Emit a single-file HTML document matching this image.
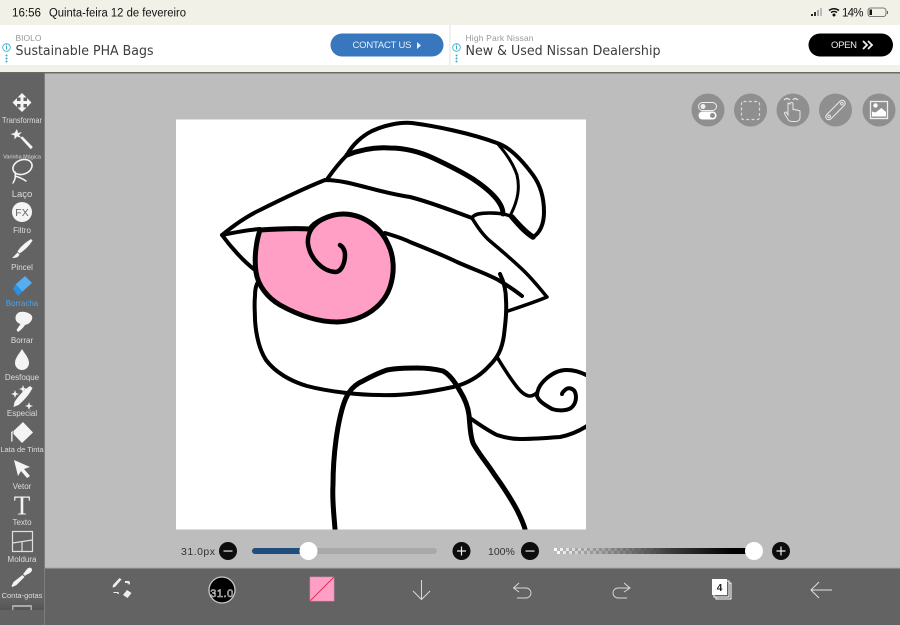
<!DOCTYPE html>
<html><head><meta charset="utf-8"><style>
html,body{margin:0;padding:0;width:900px;height:625px;overflow:hidden;background:#bdbdbd}
svg.root{display:block;filter:blur(.3px)}
text{font-family:"Liberation Sans",sans-serif}
.l{font-size:8px;fill:#dcdcdc;text-anchor:middle}
.t{font-family:"DejaVu Sans",sans-serif;font-size:13.5px;fill:#3c3c3c}
</style></head><body>
<svg class="root" width="900" height="625" viewBox="0 0 900 625" xmlns="http://www.w3.org/2000/svg">
<defs>
<linearGradient id="op" x1="0" x2="1"><stop offset="0" stop-color="#000" stop-opacity="0"/><stop offset=".25" stop-color="#000" stop-opacity=".25"/><stop offset=".6" stop-color="#000" stop-opacity=".7"/><stop offset=".9" stop-color="#000" stop-opacity="1"/><stop offset="1" stop-color="#000"/></linearGradient>
<pattern id="ck" width="6" height="6" patternUnits="userSpaceOnUse" x="554" y="548"><rect width="3" height="3" fill="#fff"/><rect x="3" y="3" width="3" height="3" fill="#fff"/></pattern>
<linearGradient id="ckfade" x1="0" x2="1"><stop offset="0" stop-color="#fff"/><stop offset=".25" stop-color="#fff" stop-opacity=".5"/><stop offset=".5" stop-color="#fff" stop-opacity=".15"/><stop offset="1" stop-color="#fff" stop-opacity="0"/></linearGradient>
<mask id="ckm"><rect x="554" y="548" width="198" height="6" fill="url(#ckfade)"/></mask>
<linearGradient id="bt" x1="0" y1="0" x2="0" y2="1"><stop offset="0" stop-color="#555" stop-opacity="0"/><stop offset="1" stop-color="#4a4a4a"/></linearGradient>
</defs>
<rect width="900" height="625" fill="#bdbdbd"/>
<!-- status bar -->
<rect width="900" height="72" fill="#f2f1e8"/>
<text x="12" y="16.500" font-size="11.500" fill="#111" textLength="29" lengthAdjust="spacingAndGlyphs">16:56</text>
<text x="49" y="16.500" font-size="11.500" fill="#111" textLength="137" lengthAdjust="spacingAndGlyphs">Quinta-feira 12 de fevereiro</text>
<rect x="811" y="14" width="2" height="2" fill="#222"/><rect x="814" y="12" width="2" height="4" fill="#333"/><rect x="817" y="10" width="2" height="6" fill="#aaa"/><rect x="820" y="8" width="2" height="8" fill="#bbb"/>
<path d="M829 10.500a8 8 0 0 1 10 0M831 12.500a5 5 0 0 1 6 0" fill="none" stroke="#111" stroke-width="1.500"/><circle cx="834" cy="15" r="1.500" fill="#111"/>
<text x="842" y="16.500" font-size="11.500" fill="#111" textLength="21.500">14%</text>
<rect x="868" y="8" width="18" height="8.500" rx="2.500" fill="none" stroke="#555" stroke-width=".8"/><rect x="869.500" y="9.500" width="2.500" height="5.500" fill="#111"/><rect x="887" y="11" width="1" height="3" fill="#666"/>
<!-- ads -->
<rect x="0" y="25" width="449" height="40" fill="#fff"/>
<rect x="451" y="25" width="449" height="40" fill="#fff"/>
<text x="15.500" y="41" font-size="8.500" fill="#999">BIOLO</text>
<text class="t" x="15.500" y="55" textLength="138" lengthAdjust="spacingAndGlyphs">Sustainable PHA Bags</text>
<rect x="330.500" y="33.500" width="113" height="23" rx="11.500" fill="#3876bd"/>
<text x="352.500" y="48" font-size="9.500" fill="#e8f0fa" textLength="59">CONTACT US</text>
<path d="M417 42l4 3.500-4 3.500z" fill="#e8f0fa"/>
<circle cx="6.500" cy="47.500" r="3.800" fill="none" stroke="#3ba7c4" stroke-width=".8"/><rect x="6" y="46" width="1" height="3.500" fill="#3ba7c4"/><rect x="6" y="44.500" width="1" height="1" fill="#3ba7c4"/>
<circle cx="6.500" cy="55.500" r="1" fill="#3ba7c4"/><circle cx="6.500" cy="58.500" r="1" fill="#3ba7c4"/><circle cx="6.500" cy="61.500" r="1" fill="#3ba7c4"/>
<text x="465.500" y="41" font-size="8.500" fill="#999" textLength="68">High Park Nissan</text>
<text class="t" x="465.500" y="55" textLength="195" lengthAdjust="spacingAndGlyphs">New &amp; Used Nissan Dealership</text>
<rect x="808.500" y="33.500" width="84.500" height="23" rx="11.500" fill="#000"/>
<text x="831" y="48" font-size="9.500" fill="#eee" textLength="26">OPEN</text>
<path d="M863 41l4 4-4 4M868 41l4 4-4 4" fill="none" stroke="#eee" stroke-width="1.800"/>
<circle cx="456.500" cy="47.500" r="3.800" fill="none" stroke="#3ba7c4" stroke-width=".8"/><rect x="456" y="46" width="1" height="3.500" fill="#3ba7c4"/><rect x="456" y="44.500" width="1" height="1" fill="#3ba7c4"/>
<circle cx="456.500" cy="55.500" r="1" fill="#3ba7c4"/><circle cx="456.500" cy="58.500" r="1" fill="#3ba7c4"/><circle cx="456.500" cy="61.500" r="1" fill="#3ba7c4"/>
<rect x="0" y="72" width="900" height="1.500" fill="#6a6a66"/>
<!-- sidebar -->
<rect x="0" y="73" width="44" height="552" fill="#636363"/>
<rect x="44" y="73" width="1" height="552" fill="#7d7d7d"/>
<g fill="#f4f4f4">
<!-- transform -->
<path d="M22 93l4.500 4.500h-3v3.500h3.500v-3l4.500 4.500-4.500 4.500v-3h-3.500v3.500h3l-4.500 4.500-4.500-4.500h3v-3.500h-3.500v3l-4.500-4.500 4.500-4.500v3h3.500v-3.500h-3z"/>
<!-- wand -->
<path d="M20.500 138l1.800-1.800 10.500 10.800-2 2.300z"/>
<path d="M17 129l1 4 4-1-3 3 2.500 3-4.500-1.500-2.500 3v-4l-4-1.500 4-1z"/>
<!-- lasso -->
<ellipse cx="22.500" cy="167" rx="9.800" ry="7.200" transform="rotate(-20 22.500 167)" fill="none" stroke="#f4f4f4" stroke-width="1.600"/>
<path d="M15 172C16 176 15 180 13 183M15 176C19 177 23 179 26 181" fill="none" stroke="#f4f4f4" stroke-width="1.500" stroke-linecap="round"/>
<!-- FX -->
<circle cx="22" cy="212" r="10"/>
<!-- brush -->
<path d="M31 239l1.500 1.500c-3 5-8 10-13 13l-2-2c3-5 8-9 13.500-12.500z"/>
<path d="M17.500 252.500l2 2c-1 3-4 3.500-7.500 3.500 2-1.500 3.500-3.500 5.500-5.500z"/>
<!-- smudge -->
<path d="M20 312c5-1 10 1 12 4 1 3-1 6-4 8l-3 1c-2 3-4 5-7 7l-1.500-2 4-6c-3-1-5-3-5-6 0-3 2-5.500 4.500-6z"/>
<!-- blur drop -->
<path d="M22 349c3 5 7 9 7 14a7 7 0 0 1-14 0c0-5 4-9 7-14z"/>
<!-- special -->
<path d="M30 386l2.500 2c-3 6-8 12-14 17l-5 2 1-5c4-6 9-12 15.500-16z"/>
<path d="M23 385l1 3 3 1-3 1-1 3-1-3-3-1 3-1zM15 390l1 3 3 1-3 1-1 3-1-3-3-1 3-1zM29 402l1 3 3 1-3 1-1 3-1-3-3-1 3-1z"/>
<!-- fill -->
<path d="M23 422l10 10.500-11 10.500-8.500-9v-3z"/>
<path d="M12.500 433.500v8h-1.300v-9.500l2-1z"/>
<!-- vector arrow -->
<path d="M14 460l16 7-6 2 6 7-3 2-6-7-3 5z"/>
<!-- eyedropper -->
<path d="M27 569c2-2 5-2 5 1 0 1-1 2-2 3l-4 2-1 1-2-2 1-1z"/>
<path d="M22.500 575l2 2-8 8-4 2-1-1 2-4z"/>
</g>
<path d="M12.500 531.500h20v20h-20zM12.500 543l20-3M22 542v9" fill="none" stroke="#dedede" stroke-width="1.200"/>
<rect x="0" y="597" width="44" height="13" fill="url(#bt)" opacity=".6"/>
<path d="M12 605h20v2H12zM12 607h1.500v3H12zM30.500 607H32v3h-1.500z" fill="#aaa"/>
<text x="22" y="216" font-size="10.500" fill="#636363" text-anchor="middle">FX</text>
<text x="22" y="514.500" font-size="27" fill="#f4f4f4" text-anchor="middle" style='font-family:"Liberation Serif",serif'>T</text>
<path d="M25 276l7 7-9.500 8.500-7-7z" fill="#55aef0"/>
<path d="M15.500 284.500l7 7-4.500 4.500-5-7z" fill="#2e8fdf"/>
<text class="l" x="22" y="123" textLength="40" lengthAdjust="spacingAndGlyphs">Transformar</text>
<text x="22" y="158.500" font-size="5.500" fill="#dcdcdc" text-anchor="middle">Varinha Mágica</text>
<text class="l" x="22" y="197" style="font-size:9.500px">Laço</text>
<text class="l" x="22" y="233">Filtro</text>
<text class="l" x="22" y="270">Pincel</text>
<text class="l" x="22" y="306" style="fill:#4da3e8">Borracha</text>
<text class="l" x="22" y="343">Borrar</text>
<text class="l" x="22" y="380">Desfoque</text>
<text class="l" x="22" y="416">Especial</text>
<text class="l" x="22" y="452" style="font-size:7.500px">Lata de Tinta</text>
<text class="l" x="22" y="489">Vetor</text>
<text class="l" x="22" y="525">Texto</text>
<text class="l" x="22" y="562">Moldura</text>
<text class="l" x="22" y="598" style="font-size:7.500px">Conta-gotas</text>
<!-- canvas -->
<rect x="176" y="119.500" width="410" height="410" fill="#fff"/>
<svg x="176" y="119.500" width="410" height="410" viewBox="176 119.500 410 410">
<g fill="none" stroke="#000" stroke-linecap="round" stroke-linejoin="round">
<path fill="#ff9fc6" stroke-width="5" d="M260 230C275 229 295 228 310 229C314 222 330 214 343 214C362 214 380 226 388 244C394 256 395 272 390 287C384 305 365 321 337 322C318 322 298 315 280 305C268 298 258 286 256 272C254 258 256 242 260 230Z"/>
<path stroke-width="4.500" d="M323 219C312 225 307 234 308 244C310 258 322 271 335 272C342 272 345 262 345 255C345 250 343 247 340 245"/>
<path stroke-width="4" d="M222 235C232 233 246 230 260 229M222 235C230 246 243 261 255 270M222 235C233 226 245 217 260 210C280 200 305 188 325 180C350 180 375 192 410 197C430 202 450 210 472 218"/>
<path stroke-width="4" d="M328 178C335 168 340 162 347 155C352 145 362 136 372 131C385 125 400 122 412 123C435 126 470 133 497 143C510 147 522 160 533 175C541 186 544 198 544 212C544 224 540 233 533 237"/>
<path stroke-width="5" d="M347 155C360 150 375 147 390 148C405 148 420 152 433 158C448 165 462 172 473 179C485 187 495 195 500 204C503 209 503 212 503 214"/>
<path stroke-width="3" d="M497 143C505 152 513 163 517 175C520 188 518 200 511 214"/>
<path stroke-width="3.500" d="M472 218C474 214 480 213 490 213C498 213 507 214 512 217"/>
<path stroke-width="5.500" d="M512 217C518 224 525 232 533 237"/>
<path stroke-width="3.500" d="M472 218C478 228 484 236 490 241C503 252 515 262 525 272C535 282 541 290 547 297C535 302 520 307 508 311"/>
<path stroke-width="4" d="M385 233C395 236 402 238 410 242C430 250 445 256 457 262C475 270 490 275 500 281C510 287 517 292 522 296"/>
<path stroke-width="4" d="M500 274C504 282 506 290 506 300C507 315 505 325 504 335C502 350 497 358 490 365C482 374 470 383 453 387C430 392 405 396 380 395C360 395 330 392 307 386C290 381 275 372 266 360C259 349 256 335 255 320C255 312 254 305 255 296C255 290 256 285 258 282"/>
<path stroke-width="5" d="M335 529C334 515 332 500 333 485C333 470 334 455 336 440C338 425 342 405 347 396C350 390 354 386 359 383C367 379 375 374 387 370C397 368 407 368 417 368C425 368 435 369 443 371C449 374 455 382 460 391C465 399 468 407 469 415C470 425 470 435 473 443C478 453 487 463 494 474C502 485 510 497 517 510C520 516 523 522 525 529"/>
<path stroke-width="3.500" d="M497 357C503 367 510 378 517 387C521 392 526 396 530 396C533 396 535 394 537 393"/>
<path stroke-width="4" d="M590 377C583 373 575 370 567 370C558 370 552 374 547 378C541 383 537 389 537 396C539 402 547 406 552 409C558 411 566 411 571 408C576 404 577 397 575 392C573 388 568 387 565 390C563 392 562 393 562 394"/>
<path stroke-width="4" d="M470 418C480 425 487 430 497 435C506 438 513 439 520 439C535 439 545 438 560 437C570 435 580 431 590 424"/>
</g>
</svg>
<!-- top right tool buttons -->
<g fill="#8f8f8f"><circle cx="708" cy="110" r="16.500"/><circle cx="750.500" cy="110" r="16.500"/><circle cx="793" cy="110" r="16.500"/><circle cx="835.500" cy="110" r="16.500"/><circle cx="879" cy="110" r="16.500"/></g>
<rect x="698.500" y="102.500" width="18" height="8" rx="4" fill="none" stroke="#eee" stroke-width="1"/><circle cx="703" cy="106.500" r="2.500" fill="#eee"/>
<rect x="698.500" y="111.500" width="18" height="8" rx="4" fill="#fff"/><circle cx="712.500" cy="115.500" r="2.500" fill="#8f8f8f"/>
<rect x="741.500" y="101.500" width="18" height="18" rx="2" fill="none" stroke="#d8d8d8" stroke-width="1.200" stroke-dasharray="3 2.300"/>
<path d="M788 103v12l-1.500-2.500c-1-1-2.500 0-2 1l3.500 6c1 1.500 2.500 2 4 2h4c2.500 0 4-2 4-4v-6c0-1-1.500-1.500-2-.5 0-1.500-2-1.500-2.500-.5 0-1.500-2-1.500-2.500-.5v-6c0-2-3-2-3 0z" fill="none" stroke="#e6e6e6" stroke-width="1"/>
<path d="M784 100c2-2 4-2 6 0M793 100c1-2 3-2 5 0" fill="none" stroke="#e6e6e6" stroke-width="1.200"/>
<g transform="rotate(-45 835.500 110)"><rect x="823" y="107" width="25" height="6" rx="3" fill="none" stroke="#e6e6e6" stroke-width="1.100"/><circle cx="826.500" cy="110" r="1.300" fill="none" stroke="#e6e6e6"/><circle cx="844.500" cy="110" r="1.300" fill="none" stroke="#e6e6e6"/></g>
<rect x="870.500" y="101.500" width="17" height="17" fill="none" stroke="#eee" stroke-width="1.300"/>
<circle cx="875.500" cy="105.500" r="2.200" fill="#fff"/>
<path d="M872 116.500v-5l3.500 1 6-4.500 4.500 4v4.500z" fill="#fff"/>
<!-- slider row -->
<text x="181" y="555" font-size="10.500" fill="#333" letter-spacing=".5">31.0px</text>
<circle cx="228" cy="551" r="9" fill="#0d0d0d"/><rect x="223.500" y="550.300" width="9" height="1.500" fill="#bbb"/>
<rect x="252" y="548" width="185" height="6" rx="3" fill="#a9a9a9"/>
<rect x="252" y="548" width="56" height="6" rx="3" fill="#1f4e7c"/>
<circle cx="308.500" cy="551" r="9" fill="#fff"/>
<circle cx="461.500" cy="551" r="9" fill="#0d0d0d"/><path d="M457 551h9M461.500 546.500v9" stroke="#eee" stroke-width="1.200"/>
<text x="488" y="555" font-size="10.500" fill="#333">100%</text>
<circle cx="530" cy="551" r="9" fill="#0d0d0d"/><rect x="525.500" y="550.300" width="9" height="1.500" fill="#bbb"/>
<rect x="554" y="548" width="198" height="6" fill="url(#ck)" mask="url(#ckm)"/>
<rect x="554" y="548" width="198" height="6" fill="url(#op)"/>
<circle cx="754" cy="551" r="9" fill="#fff"/>
<circle cx="781" cy="551" r="9" fill="#0d0d0d"/><path d="M776.500 551h9M781 546.500v9" stroke="#eee" stroke-width="1.200"/>
<!-- bottom bar -->
<rect x="45" y="567.500" width="855" height="1" fill="#a5a5a5"/>
<rect x="45" y="568.500" width="855" height="56.500" fill="#636363"/>
<!-- transform/swap icon -->
<g fill="#eee">
<path d="M119.500 578l2 1.500-6.500 7.500-2.500.5.500-2.500z"/>
<path d="M125 581h4l1 1-1 1h-4zM127 584l3-1.500v2z"/>
<path d="M114 592l-1 1h4l1 1 1 0 0-1-1-1z"/>
<path d="M127 590l4.500 3-4 5-4.500-3z"/>
</g>
<!-- brush preview -->
<circle cx="222" cy="590" r="13" fill="#000" stroke="#c8c8c8" stroke-width="1.300"/>
<text x="222" y="597" font-size="11" fill="#000" stroke="#d8d8d8" stroke-width=".6" text-anchor="middle" letter-spacing=".5">31.0</text>
<!-- colour -->
<rect x="310" y="577" width="24" height="24" fill="#ff9fc6" stroke="#e58aa8" stroke-width=".6"/>
<path d="M310 601l24-24" stroke="#e0305a" stroke-width="1"/>
<!-- arrow down -->
<path d="M421.500 580v19M413 591l8.500 8.500 8.500-8.500" fill="none" stroke="#d8d8d8" stroke-width="1"/>
<!-- undo -->
<path d="M514 588h12c3 0 5 2.500 5 5s-2 5-5 5h-9M519 583l-5.500 5 5.500 4" fill="none" stroke="#d8d8d8" stroke-width="1"/>
<!-- redo -->
<path d="M630 588h-12c-3 0-5 2.500-5 5s2 5 5 5h9M624 583l6 5-6 4" fill="none" stroke="#d8d8d8" stroke-width="1"/>
<!-- layers -->
<rect x="716" y="583" width="15" height="16" fill="#636363" stroke="#fff" stroke-width="1"/>
<rect x="714" y="581" width="15" height="16" fill="#636363" stroke="#fff" stroke-width="1"/>
<rect x="712" y="579" width="15" height="16" fill="#fff"/>
<text x="719.500" y="591" font-size="10" font-weight="bold" fill="#222" text-anchor="middle">4</text>
<!-- back -->
<path d="M811 590h21M819 582l-8 8 8 8" fill="none" stroke="#e0e0e0" stroke-width="1"/>
</svg>
</body></html>
